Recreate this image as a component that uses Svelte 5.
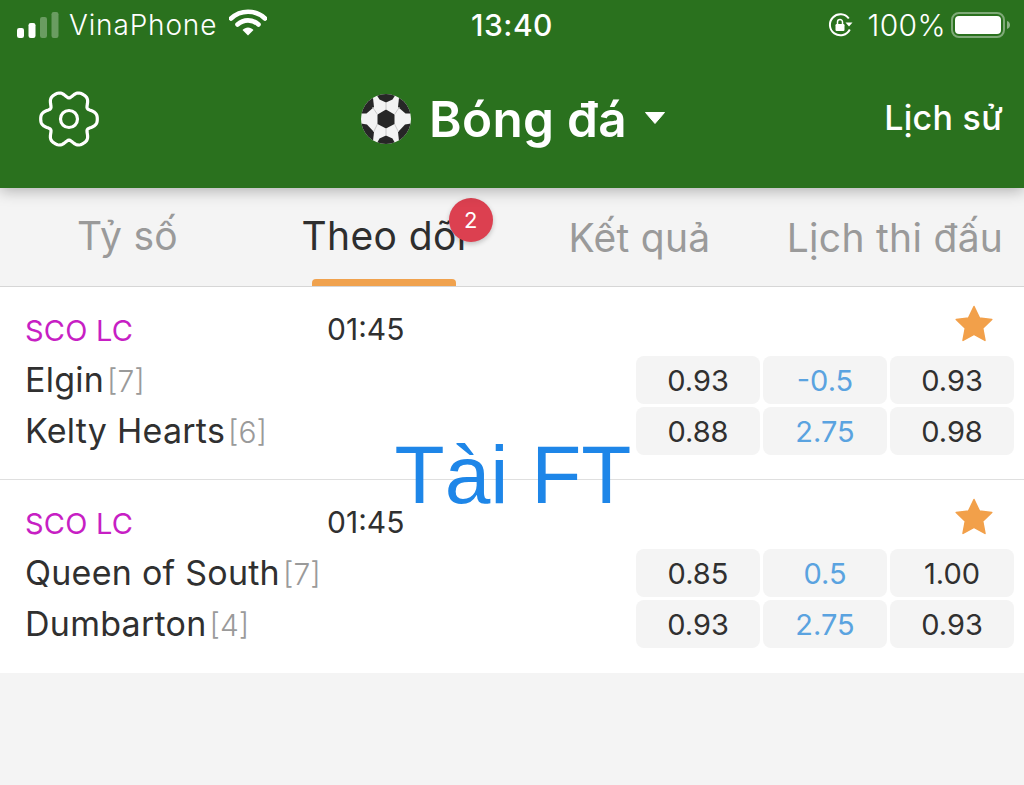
<script>
  const tabs = [
    { label: 'Tỷ số' },
    { label: 'Theo dõi', active: true, badge: 2 },
    { label: 'Kết quả' },
    { label: 'Lịch thi đấu' }
  ];
  const matches = [
    { league: 'SCO LC', time: '01:45', teams: [
      { name: 'Elgin', rank: 7, odds: ['0.93', '-0.5', '0.93'] },
      { name: 'Kelty Hearts', rank: 6, odds: ['0.88', '2.75', '0.98'] }
    ]},
    { league: 'SCO LC', time: '01:45', teams: [
      { name: 'Queen of South', rank: 7, odds: ['0.85', '0.5', '1.00'] },
      { name: 'Dumbarton', rank: 4, odds: ['0.93', '2.75', '0.93'] }
    ]}
  ];

  // Six-lobed gear outline, flat side up, sampled around its centre.
  const gearPath = Array.from({ length: 120 }, (_, i) => {
    const a = (i / 120) * Math.PI * 2;
    const r = 25.5 + 3.6 * Math.cos(6 * a) - 0.8 * Math.cos(12 * a);
    const x = 30 + r * Math.cos(a);
    const y = 30 + r * Math.sin(a);
    return (i ? 'L' : 'M') + x.toFixed(2) + ' ' + y.toFixed(2);
  }).join('') + 'Z';
</script>

<div class="page">
  <header class="header">
    <div class="status">
      <div class="status-left">
        <svg class="signal" width="42" height="26" viewBox="0 0 42 26">
          <rect x="0" y="16" width="7" height="10" rx="2.2" fill="#fff"/>
          <rect x="11.500" y="11" width="7" height="15" rx="2.2" fill="#fff"/>
          <rect x="23" y="5" width="7" height="21" rx="2.2" fill="#fff" opacity=".3"/>
          <rect x="34.500" y="0" width="7" height="26" rx="2.2" fill="#fff" opacity=".3"/>
        </svg>
        <span class="carrier">VinaPhone</span>
        <svg class="wifi" width="38" height="28" viewBox="0 0 38 28">
          <path d="M2 10.500C11.500 1.500 26.500 1.500 36 10.500" fill="none" stroke="#fff" stroke-width="4.600" stroke-linecap="round"/>
          <path d="M8.500 16.500C14.500 11 23.500 11 29.500 16.500" fill="none" stroke="#fff" stroke-width="4.600" stroke-linecap="round"/>
          <path d="M13.500 22C16.500 18.600 21.500 18.600 24.500 22L19 27.500Z" fill="#fff"/>
        </svg>
      </div>
      <span class="clock">13:40</span>
      <div class="status-right">
        <svg class="lock" width="28" height="28" viewBox="0 0 28 28">
          <path d="M22.800 18.500A10.500 10.500 0 1 1 21.800 7.500" fill="none" stroke="#fff" stroke-width="2"/>
          <path d="M18.500 11.500h7l-3.500 4z" fill="#fff"/>
          <rect x="8.500" y="13" width="9" height="7" rx="1.200" fill="#fff"/>
          <path d="M10.500 13.500V11a2.500 2.500 0 0 1 5 0V13.500" fill="none" stroke="#fff" stroke-width="1.500"/>
        </svg>
        <span class="pct">100%</span>
        <svg class="battery" width="60" height="28" viewBox="0 0 60 28">
          <rect x="1" y="2" width="52" height="24" rx="7" fill="none" stroke="#fff" stroke-opacity=".4" stroke-width="2"/>
          <rect x="4" y="5" width="46" height="18" rx="4" fill="#fff"/>
          <path d="M56 10c2 .6 3 2.200 3 4s-1 3.400-3 4z" fill="#fff" opacity=".45"/>
        </svg>
      </div>
    </div>
    <nav class="nav">
      <svg class="gear" width="60" height="60" viewBox="0 0 60 60">
        <path d={gearPath} fill="none" stroke="#fff" stroke-width="3.200" stroke-linejoin="round"/>
        <circle cx="30" cy="30" r="8.500" fill="none" stroke="#fff" stroke-width="3.200"/>
      </svg>
      <div class="title">
        <svg class="ball" width="50" height="50" viewBox="0 0 50 50">
          <defs><clipPath id="ballclip"><circle cx="25" cy="25" r="25"/></clipPath></defs>
          <circle cx="25" cy="25" r="25" fill="#f3f3f3"/>
          <g clip-path="url(#ballclip)" fill="#262626">
            <path d="M25 15.500l8.500 5V30L25 34.500 16.500 30v-9.500z"/>
            <path d="M15 0h20l-3.500 5.500L25 8.500l-6.500-3z"/>
            <path d="M12 4l1 9-7.500 6.500H0V6z"/>
            <path d="M38 4l-1 9 7.500 6.500H50V6z"/>
            <path d="M0 29.500l6 1 7 7.500-1 9h-9l-5-10z"/>
            <path d="M50 29.500l-6 1-7 7.500 1 9h9l5-10z"/>
            <path d="M25 41.500l6.500 3 3 5.500h-19l3-5.500z"/>
          </g>
          <g fill="none" stroke="#c4c4c4" stroke-width=".9" clip-path="url(#ballclip)">
            <path d="M25 15.500v-7M33.500 20.500l5-7.500M33.500 30l4 8M25 34.500v7M16.500 30l-4 8M16.500 20.500l-5-7.500"/>
          </g>
        </svg>
        <span class="title-text">Bóng đá</span>
        <svg class="caret" width="22" height="14" viewBox="0 0 22 14"><path d="M1.500 1.500h19L11 12.500z" fill="#fff" stroke="#fff" stroke-linejoin="round"/></svg>
      </div>
      <span class="history">Lịch sử</span>
    </nav>
  </header>

  <div class="tabs">
    {#each tabs as tab}
      <div class="tab" class:active={tab.active}>
        <span class="tab-label">{tab.label}
          {#if tab.badge}<span class="badge">{tab.badge}</span>{/if}
        </span>
        {#if tab.active}<span class="underline"></span>{/if}
      </div>
    {/each}
  </div>

  <main class="list">
    {#each matches as m}
      <section class="match">
        <div class="top">
          <span class="league">{m.league}</span>
          <span class="time">{m.time}</span>
          <svg class="star" width="40" height="40" viewBox="0 0 40 40">
            <path d="M20 2.500l5.400 11.400 12.400 1.600-9.100 8.600 2.300 12.300L20 30.400 9 36.400l2.300-12.300-9.100-8.600 12.400-1.600z" fill="#f2a04a" stroke="#f2a04a" stroke-width="1.500" stroke-linejoin="round"/>
          </svg>
        </div>
        {#each m.teams as t}
          <div class="team-row">
            <span class="team">{t.name}<span class="rank">[{t.rank}]</span></span>
            <div class="odds">
              {#each t.odds as o, i}
                <span class="odd" class:blue={i === 1}>{o}</span>
              {/each}
            </div>
          </div>
        {/each}
      </section>
    {/each}
  </main>

  <div class="overlay">Tài FT</div>
</div>

<style>
  :global(body) { margin: 0; background: #f4f4f4; }
  .page {
    position: relative;
    width: 1024px;
    height: 785px;
    overflow: hidden;
    background: #f4f4f4;
    font-family: Inter, "Liberation Sans", sans-serif;
    color: #303030;
  }
  .header {
    position: relative;
    z-index: 2;
    height: 188px;
    background: #2a711e;
    color: #fff;
    box-shadow: 0 3px 14px rgba(0, 0, 0, .28);
    display: flex;
    flex-direction: column;
  }
  .status {
    height: 50px;
    display: grid;
    grid-template-columns: 1fr auto 1fr;
    align-items: center;
    padding: 0 13px 0 17px;
  }
  .status-left { display: flex; align-items: center; font-size: 28px; }
  .carrier { margin-left: 10px; font-weight: 300; letter-spacing: .85px; }
  .wifi { margin-left: 12px; margin-top: -6px; }
  .clock { font-size: 30px; font-weight: 500; letter-spacing: .5px; margin-right: 4px; }
  .status-right { display: flex; align-items: center; justify-content: flex-end; font-size: 30px; }
  .pct { margin-left: 12px; font-weight: 300; letter-spacing: .4px; }
  .battery { margin-left: 5px; }
  .nav {
    flex: 1;
    display: grid;
    grid-template-columns: 1fr auto 1fr;
    align-items: center;
    padding: 0 21px 0 39px;
  }
  .title { display: flex; align-items: center; margin-right: 15px; }
  .title-text { margin-left: 18px; font-size: 49.5px; font-weight: 600; letter-spacing: .3px; }
  .caret { margin-left: 17px; margin-top: -2px; }
  .history { justify-self: end; margin-top: -3px; font-size: 34px; font-weight: 500; letter-spacing: .3px; }
  .tabs {
    height: 98px;
    display: grid;
    grid-template-columns: 255px 258px 253px 258px;
    border-bottom: 1px solid #d6d6d6;
    background: #f4f4f4;
  }
  .tab {
    position: relative;
    display: flex;
    justify-content: center;
    padding-top: 25px;
    font-size: 39px;
    letter-spacing: .3px;
    color: #9a9a9a;
  }
  .tab:nth-child(n + 3) { padding-top: 27px; }
  .tab.active { color: #2e2e2e; letter-spacing: .4px; }
  .tab-label { position: relative; line-height: 46px; height: 46px; }
  .badge {
    position: absolute;
    top: -15px;
    right: -26px;
    width: 44px;
    height: 44px;
    border-radius: 50%;
    background: #dc4050;
    color: #fff;
    font-size: 22px;
    line-height: 44px;
    text-align: center;
    letter-spacing: 0;
    box-shadow: 0 2px 5px rgba(0, 0, 0, .22);
  }
  .underline {
    position: absolute;
    left: 57px;
    bottom: 0;
    width: 144px;
    height: 7px;
    border-radius: 4px 4px 0 0;
    background: #f0a24e;
  }
  .list { display: flex; flex-direction: column; gap: 1px; background: #dfdfdf; }
  .match {
    height: 192px;
    background: #fff;
    padding: 0 10px 0 25px;
    box-sizing: border-box;
  }
  .match:last-child { height: 193px; }
  .top { height: 69px; display: flex; align-items: center; }
  .league { width: 302px; padding-top: 19px; font-size: 29px; letter-spacing: .2px; color: #c71fc4; line-height: 44px; height: 44px; }
  .time { font-size: 30px; padding-top: 14px; }
  .star { margin-left: auto; margin-right: 20px; margin-top: 5px; }
  .team-row { display: flex; align-items: center; justify-content: space-between; height: 48px; margin-bottom: 3px; }
  .team { font-size: 34px; letter-spacing: .25px; padding-bottom: 2px; }
  .rank { margin-left: 3px; color: #9a9a9a; font-size: 30px; font-weight: 300; letter-spacing: 0; }
  .odds { display: grid; grid-template-columns: repeat(3, 124px); gap: 3px; }
  .odd {
    height: 48px;
    line-height: 50px;
    border-radius: 8px;
    background: #f4f4f4;
    text-align: center;
    font-size: 29px;
  }
  .odd.blue { color: #5aa3e0; }
  .overlay {
    position: absolute;
    z-index: 3;
    left: 2px;
    right: 0;
    top: 429px;
    text-align: center;
    font-family: "Liberation Sans", Arial, sans-serif;
    font-size: 82px;
    line-height: 92px;
    color: #1e86e8;
  }
</style>
